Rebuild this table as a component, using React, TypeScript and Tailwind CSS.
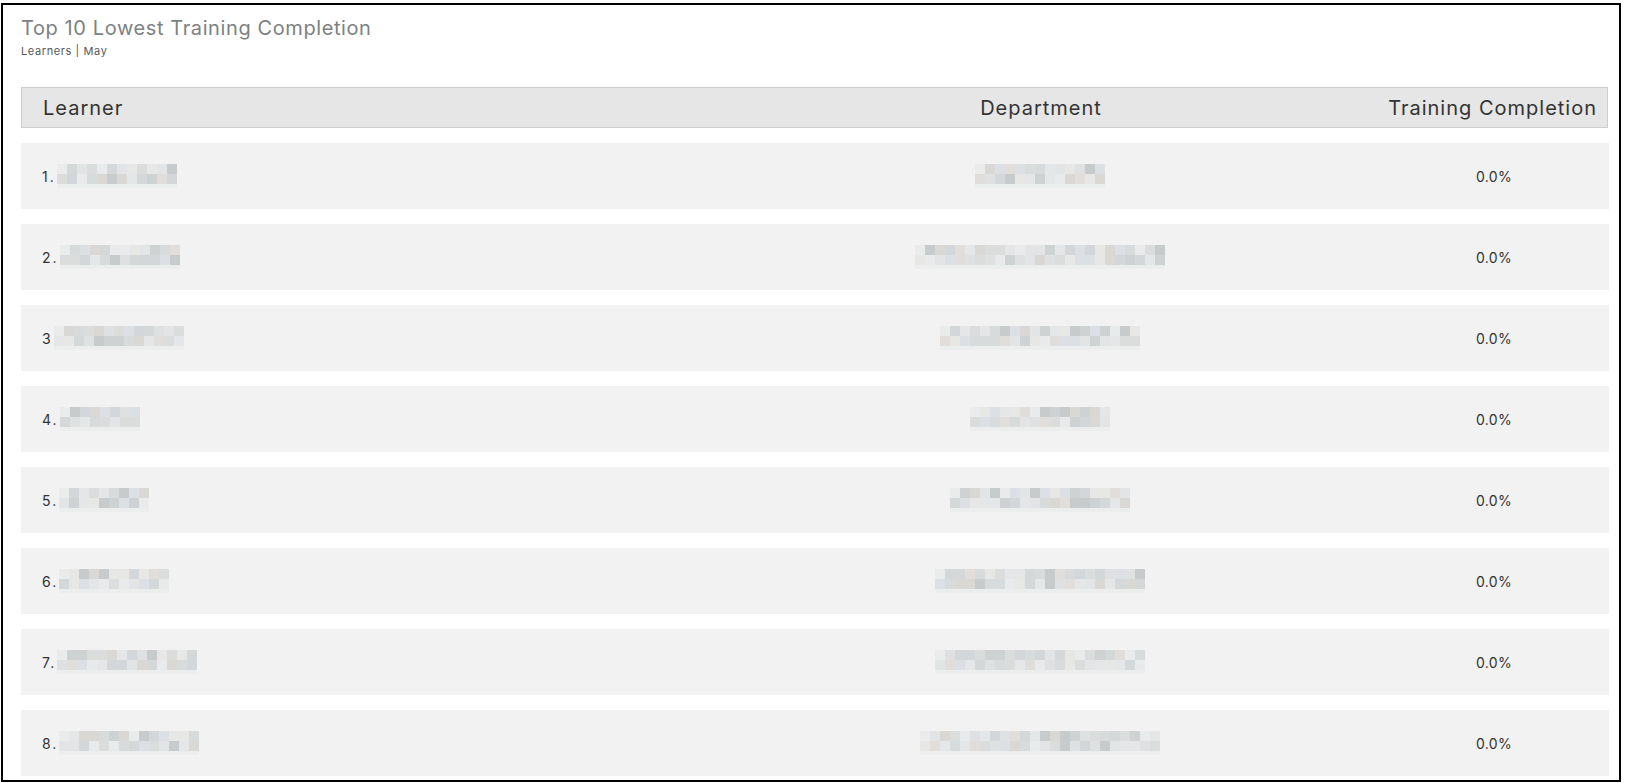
import React from "react";

const palette = [
  "#d8dbdc", "#dee0e1", "#e4e6e7", "#d5d8d9", "#cfd2d3", "#dbdcdc", "#e7e7e5",
  "#dcdfe3", "#d3d7da", "#e9eaeb", "#c8cbcc", "#e0dddb", "#dad8d4", "#e2e4e6",
];

function rng(seed: number) {
  let s = seed * 9301 + 49297;
  return () => {
    s = (s * 9301 + 49297) % 233280;
    return s / 233280;
  };
}

function Mosaic({ width, seed }: { width: number; seed: number }) {
  const r = rng(seed);
  const n = Math.max(1, Math.round(width / 10));
  const rows = [0, 1].map((row) =>
    Array.from({ length: n }, (_, i) => {
      const faint = row === 0 && i === 0;
      return faint ? "#eaecec" : palette[Math.floor(r() * palette.length)];
    })
  );
  return (
    <div className="flex flex-col" style={{ width: n * 10 }}>
      {rows.map((cells, ri) => (
        <div key={ri} className="flex">
          {cells.map((c, ci) => (
            <div key={ci} className="h-[10px] w-[10px]" style={{ backgroundColor: c }} />
          ))}
        </div>
      ))}
      <div className="h-[4px] w-full bg-[#eceeee]" />
    </div>
  );
}

const rows = [
  { n: "1.", lw: 121, dw: 131 },
  { n: "2.", lw: 116, dw: 249 },
  { n: "3", lw: 134, dw: 198 },
  { n: "4.", lw: 78, dw: 138 },
  { n: "5.", lw: 89, dw: 181 },
  { n: "6.", lw: 106, dw: 209 },
  { n: "7.", lw: 138, dw: 205 },
  { n: "8.", lw: 135, dw: 235 },
];

export default function App() {
  return (
    <div className="pl-[1px] pt-[3px] bg-white" style={{ fontFamily: "Inter, 'Open Sans', sans-serif" }}>
      <div className="w-[1620px] h-[779px] border-2 border-black bg-white overflow-hidden pl-[18px] pr-[10px] pt-[11px]">
        <div className="text-[20px] leading-[24px] tracking-[0.6px] text-[#7d8182]">Top 10 Lowest Training Completion</div>
        <div className="mt-[4px] text-[11px] leading-[14px] tracking-[0.6px] text-[#555a5c]">Learners | May</div>

        <div className="mt-[29px] mr-px grid h-[41px] grid-cols-[800px_438px_1fr] items-center border border-[#cdcfce] bg-[#e5e6e5] text-[20px] tracking-[1px] text-[#333]">
          <div className="pl-[21px]">Learner</div>
          <div className="text-center">Department</div>
          <div className="pr-[10px] text-right">Training Completion</div>
        </div>

        <div className="mt-[15px] flex flex-col gap-[15px]">
          {rows.map((row, i) => (
            <div
              key={i}
              className="grid h-[66px] grid-cols-[800px_438px_1fr_230px] items-center bg-[#f1f2f1] text-[#333]"
            >
              <div className="flex items-center pl-[21px]">
                <span className="mr-[1px] text-[14px] tracking-[2px]">{row.n}</span>
                <Mosaic width={row.lw} seed={i * 7 + 3} />
              </div>
              <div className="flex justify-center">
                <Mosaic width={row.dw} seed={i * 13 + 5} />
              </div>
              <div />
              <div className="text-center text-[14px] tracking-[0.3px]">0.0%</div>
            </div>
          ))}
        </div>
      </div>
    </div>
  );
}
